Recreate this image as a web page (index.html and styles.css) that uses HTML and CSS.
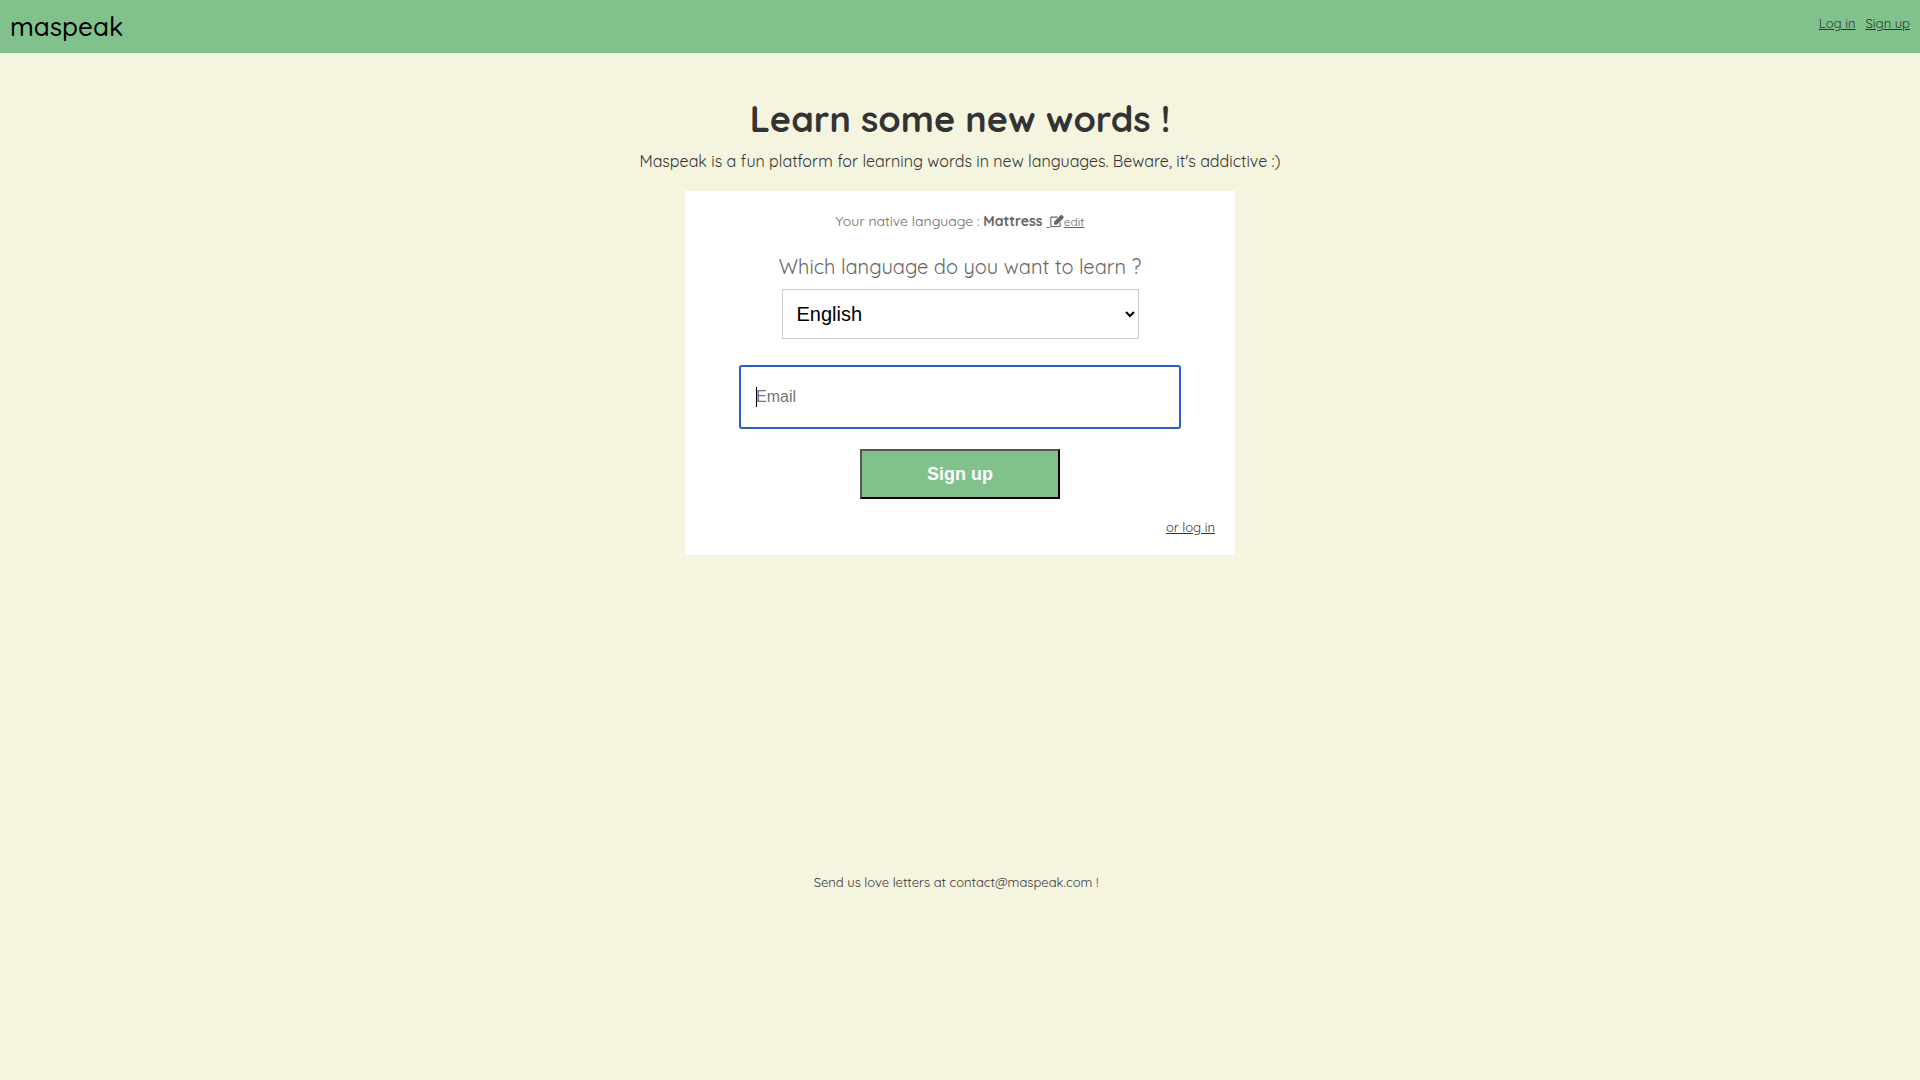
FILE: index.html
```html
<!DOCTYPE html>
<html lang="en">
<head>
<meta charset="utf-8">
<meta name="viewport" content="width=device-width, initial-scale=1">
<title>maspeak</title>
<link rel="stylesheet" href="styles.css">
</head>
<body>
<header class="topbar">
  <a class="brand" href="#">maspeak</a>
  <nav class="nav">
    <a href="#">Log in</a>
    <a href="#">Sign up</a>
  </nav>
</header>
<main class="main">
  <h1 class="title">Learn some new words !</h1>
  <p class="tagline">Maspeak is a fun platform for learning words in new languages. Beware, it's addictive :)</p>
  <form class="card">
    <p class="native">Your native language : <strong>Mattress</strong> <a class="edit" href="#">&nbsp;<svg class="edit-icon" viewBox="0 0 576 512" aria-hidden="true"><path d="M402.300 344.900l32-32c5-5 13.700-1.500 13.700 5.700V464c0 26.500-21.500 48-48 48H48c-26.500 0-48-21.500-48-48V112c0-26.500 21.500-48 48-48h273.500c7.100 0 10.700 8.600 5.700 13.700l-32 32c-1.500 1.500-3.500 2.300-5.700 2.300H48v352h352V350.500c0-2.100.8-4.100 2.300-5.600zm156.600-201.800L296.300 405.700l-90.400 10c-26.200 2.900-48.500-19.200-45.600-45.600l10-90.400L432.900 17.100c22.900-22.900 59.900-22.900 82.700 0l43.200 43.200c22.900 22.900 22.900 60 .1 82.800z"/></svg>edit</a></p>
    <label class="question" for="language">Which language do you want to learn ?</label>
    <select class="language" id="language">
      <option>English</option>
      <option>French</option>
      <option>Spanish</option>
    </select>
    <div class="email-field">
      <input class="email" type="email" placeholder="Email" aria-label="Email" autofocus>
    </div>
    <button class="submit" type="submit">Sign up</button>
    <a class="login" href="#">or log in</a>
  </form>
</main>
<footer class="footer">
  <p>Send us love letters at contact@maspeak.com !</p>
</footer>
</body>
</html>
```
FILE: styles.css
```css
* {
  box-sizing: border-box;
}

body {
  margin: 0;
  background: #f5f4df;
  color: #333;
  font-family: Quicksand, Lato, sans-serif;
  font-size: 16px;
  line-height: 20px;
}

p, h1 {
  margin: 0;
}

a {
  color: inherit;
}

.topbar {
  display: flex;
  justify-content: space-between;
  align-items: flex-start;
  padding: 10px;
  background: #81c18c;
}

.brand {
  color: #000;
  font-size: 26px;
  font-weight: 500;
  line-height: 33px;
  text-decoration: none;
}

.nav {
  display: flex;
  gap: 10px;
  font-size: 13px;
  line-height: 26px;
}

.main {
  display: flex;
  flex-direction: column;
  align-items: center;
  min-height: 800px;
  padding: 40px 16px;
}

.title {
  font-size: 36px;
  line-height: 52px;
  text-align: center;
}

.tagline {
  margin: 6px 0 20px;
  font-size: 16px;
  text-align: center;
}

.card {
  display: flex;
  flex-direction: column;
  align-items: center;
  width: 100%;
  max-width: 550px;
  padding: 20px;
  background: #fff;
  color: #666;
}

.native {
  font-size: 14px;
}

.edit {
  font-size: 12px;
  line-height: 16px;
}

.edit-icon {
  width: 14px;
  height: 12px;
  fill: currentColor;
  vertical-align: -1px;
}

.question {
  margin: 24px 0 10px;
  font-size: 20px;
  line-height: 24px;
}

.language {
  width: 70%;
  height: 50px;
  padding: 0 10px;
  border: 1px solid #ccc;
  border-radius: 0;
  background-color: #fff;
  color: #000;
  font-family: "Liberation Sans", Arial, sans-serif;
  font-size: 20px;
}

.email-field {
  position: relative;
  width: 442px;
  max-width: 100%;
  margin: 26px 0 20px;
}

.email {
  display: block;
  width: 100%;
  height: 64px;
  padding: 0 15px;
  border: 2px solid #2860c5;
  border-radius: 3px;
  outline: 0;
  background: #fff;
  caret-color: transparent;
  color: #000;
  font-family: "Liberation Sans", Arial, sans-serif;
  font-size: 16px;
}

.email::placeholder {
  color: #757575;
}

/* Steady text caret */
.email-field::after {
  content: "";
  position: absolute;
  top: 22px;
  left: 17px;
  width: 1px;
  height: 20px;
  background: #000;
}

.submit {
  width: 200px;
  height: 50px;
  border: 2px outset #000;
  background: #81c18c;
  color: #fff;
  font-family: "Liberation Sans", Arial, sans-serif;
  font-size: 18px;
  font-weight: bold;
}

.login {
  align-self: flex-end;
  margin-top: 20px;
  color: #333;
  font-size: 13px;
  line-height: 16px;
}

.footer {
  padding: 18px 16px 18px 8px;
  border-top: 1px solid #f2f2ec;
  font-size: 13px;
  text-align: center;
}
```
